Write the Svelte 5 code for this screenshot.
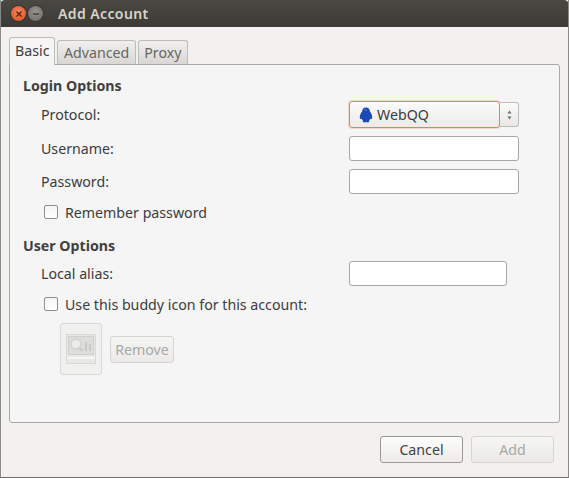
<script>
	let remember = false;
	let useIcon = false;
</script>

<div class="window">
	<header class="titlebar">
		<div class="controls">
			<span class="ctl close">
				<svg viewBox="0 0 8 8" width="8" height="8"><path d="M1.500 1.500l5 5M6.500 1.500l-5 5" stroke="#5a1a06" stroke-width="1.300" /></svg>
			</span>
			<span class="ctl min">
				<svg viewBox="0 0 8 8" width="8" height="8"><path d="M1 4h6" stroke="#3a3934" stroke-width="1.300" /></svg>
			</span>
		</div>
		<span class="title">Add Account</span>
	</header>

	<main class="content">
		<div class="tabs">
			<div class="tab active">Basic</div>
			<div class="tab">Advanced</div>
			<div class="tab">Proxy</div>
		</div>

		<section class="panel">
			<h3 class="heading first">Login Options</h3>

			<div class="row protocol">
				<span class="label">Protocol:</span>
				<div class="combo">
					<div class="combo-main">
						<svg class="qq" viewBox="0 0 14 16" width="14" height="16">
							<path d="M7 .5C4.300 .5 3.200 2.500 3.100 4.500 2.100 5.600 .6 8.200 .8 10.500 .9 12 1.800 12.300 2.700 11.800 3.100 12.700 3.500 13.300 4 13.800 3.400 14.500 4 15.500 5.200 15.500 6 15.500 6.600 15.300 7 15 7.400 15.300 8 15.500 8.800 15.500 10 15.500 10.600 14.500 10 13.800 10.500 13.300 10.900 12.700 11.300 11.800 12.200 12.300 13.100 12 13.200 10.500 13.400 8.200 11.900 5.600 10.900 4.500 10.800 2.500 9.700 .5 7 .5Z" fill="#1c49b8" />
							<path d="M5 3.500c.8-.9 2.200-.9 3 0" stroke="#5d83dc" stroke-width="1" fill="none" />
						</svg>
						<span>WebQQ</span>
					</div>
					<div class="combo-arrows">
						<svg viewBox="0 0 7 12" width="7" height="12">
							<path d="M3.500 1.500L5.500 4.500H1.500Z" fill="#6a6a68" />
							<path d="M3.500 10.500L1.500 7.500H5.500Z" fill="#6a6a68" />
						</svg>
					</div>
				</div>
			</div>

			<div class="row username">
				<label class="label" for="username">Username:</label>
				<input id="username" class="entry" type="text" />
			</div>

			<div class="row password">
				<label class="label" for="password">Password:</label>
				<input id="password" class="entry" type="password" />
			</div>

			<label class="check remember">
				<input type="checkbox" bind:checked={remember} />
				<span>Remember password</span>
			</label>

			<h3 class="heading second">User Options</h3>

			<div class="row alias">
				<label class="label" for="alias">Local alias:</label>
				<input id="alias" class="entry short" type="text" />
			</div>

			<label class="check buddy">
				<input type="checkbox" bind:checked={useIcon} />
				<span>Use this buddy icon for this account:</span>
			</label>

			<div class="icon-row">
				<button class="icon-btn" disabled aria-label="Buddy icon">
					<svg viewBox="0 0 30 30" width="30" height="30">
						<rect x="0.500" y="0.500" width="29" height="29" fill="#e8e8e7" stroke="#d8d8d7" />
						<rect x="2.500" y="2.500" width="25" height="18" fill="#dddddc" stroke="#d0d0cf" />
						<circle cx="10" cy="10" r="5" fill="#ebebea" stroke="#cbcbca" />
						<path d="M13 14l4 3M20 8v9M24 10v7" stroke="#cacac9" stroke-width="2" />
						<path d="M1 24h28" stroke="#f5f5f4" stroke-width="2" />
					</svg>
				</button>
				<button class="btn remove" disabled>Remove</button>
			</div>
		</section>

		<footer class="actions">
			<button class="btn action">Cancel</button>
			<button class="btn action" disabled>Add</button>
		</footer>
	</main>
</div>

<style>
	:global(body) {
		margin: 0;
		background: #f2f1ef;
	}

	.window {
		width: 569px;
		height: 478px;
		display: flex;
		flex-direction: column;
		font-family: "Noto Sans", "Open Sans", sans-serif;
		font-size: 14.2px;
		color: #3c3c3c;
		background: #f2f1ef;
		box-sizing: border-box;
		border-left: 1px solid #8a8985;
		border-right: 1px solid #8a8985;
		border-bottom: 1px solid #6f6e6a;
		overflow: hidden;
	}

	.titlebar {
		height: 27px;
		margin: 0 -1px;
		flex: none;
		display: flex;
		align-items: center;
		padding-left: 11px;
		gap: 15px;
		border-radius: 5px 5px 0 0;
		background: linear-gradient(#4a4842, #3b3a35);
	}

	.controls {
		display: flex;
		gap: 2px;
	}

	.ctl {
		width: 15px;
		height: 15px;
		border-radius: 50%;
		display: flex;
		align-items: center;
		justify-content: center;
	}

	.close {
		background: radial-gradient(circle at 50% 40%, #f58a5e, #d9481c);
		box-shadow: 0 0 0 1px #38362f;
	}

	.min {
		background: radial-gradient(circle at 50% 40%, #96948c, #6a6860);
		box-shadow: 0 0 0 1px #38362f;
	}

	.title {
		font-weight: 600;
		font-size: 14px;
		letter-spacing: 0.4px;
		color: #d8d5cb;
	}

	.content {
		flex: 1;
		padding: 10px 8px 0;
		display: flex;
		flex-direction: column;
	}

	.tabs {
		height: 28px;
		display: flex;
		align-items: flex-end;
		gap: 2px;
		position: relative;
		z-index: 1;
	}

	.tab {
		height: 24px;
		padding: 0 5.500px;
		box-sizing: border-box;
		line-height: 24px;
		border: 1px solid #bdbcb8;
		border-bottom: none;
		border-radius: 3px 3px 0 0;
		background: linear-gradient(#f0efee, #d8d7d4);
		color: #67665f;
		margin-bottom: 1px;
	}

	.tab.active {
		height: 28px;
		line-height: 26px;
		padding: 0 5px;
		margin-bottom: 0;
		background: #f5f5f5;
		color: #3c3c3c;
	}

	.panel {
		height: 359px;
		box-sizing: border-box;
		margin-top: -1px;
		border: 1px solid #a9a8a4;
		border-radius: 0 3px 3px 3px;
		background: #f5f5f5;
		padding: 0 13px;
	}

	.heading {
		margin: 0;
		font-size: 14.2px;
		font-weight: 700;
		line-height: 20px;
		color: #3f3f3f;
	}

	.first {
		margin-top: 11px;
	}

	.second {
		margin-top: 14px;
	}

	.row {
		display: flex;
		align-items: center;
		padding-left: 18px;
	}

	.label {
		width: 308px;
		flex: none;
	}

	.protocol {
		margin-top: 5px;
		height: 27px;
	}

	.username {
		margin-top: 8px;
		height: 25px;
	}

	.password {
		margin-top: 8px;
		height: 25px;
	}

	.alias {
		margin-top: 5px;
		height: 25px;
	}

	.combo {
		width: 170px;
		height: 27px;
		display: flex;
	}

	.combo-main {
		width: 151px;
		box-sizing: border-box;
		display: flex;
		align-items: center;
		gap: 4px;
		padding-left: 9px;
		border: 1px solid #e2825c;
		border-radius: 3px;
		box-shadow: 0 0 0 1px #f3d9cd;
		background: linear-gradient(#fafafa, #ecebe9);
	}

	.combo-arrows {
		flex: 1;
		box-sizing: border-box;
		display: flex;
		align-items: center;
		justify-content: center;
		height: 25px;
		margin-top: 1px;
		border: 1px solid #bdbcb8;
		border-left: none;
		border-radius: 0 3px 3px 0;
		background: linear-gradient(#fbfbfa, #e9e8e6);
	}

	.entry {
		width: 170px;
		height: 25px;
		box-sizing: border-box;
		padding: 0 6px;
		border: 1px solid #a8a7a3;
		border-radius: 3px;
		background: #fff;
		outline: none;
		font: inherit;
	}

	.entry.short {
		width: 158px;
	}

	.check {
		display: flex;
		align-items: center;
		gap: 7px;
		padding-left: 21px;
		height: 20px;
	}

	.check input {
		appearance: none;
		width: 14px;
		height: 14px;
		margin: 0;
		box-sizing: border-box;
		border: 1px solid #8f8e8a;
		border-radius: 2px;
		background: linear-gradient(#f4f4f3, #fff);
	}

	.remember {
		margin-top: 8px;
	}

	.buddy {
		margin-top: 8px;
	}

	.icon-row {
		display: flex;
		align-items: center;
		gap: 8px;
		padding-left: 37px;
		margin-top: 9px;
	}

	button {
		font: inherit;
		padding: 0;
	}

	.icon-btn {
		width: 42px;
		height: 52px;
		box-sizing: border-box;
		display: flex;
		align-items: center;
		justify-content: center;
		border: 1px solid #d9d8d6;
		border-radius: 3px;
		background: #f0f0ef;
	}

	.btn {
		box-sizing: border-box;
		border: 1px solid #9a9995;
		border-radius: 3px;
		background: linear-gradient(#fdfdfc, #ecebe9);
		color: #3f3f4a;
	}

	.btn:disabled {
		border-color: #d6d5d2;
		background: linear-gradient(#f5f5f4, #ebeae8);
		color: #a8a8a6;
	}

	.remove {
		width: 64px;
		height: 27px;
	}

	.actions {
		display: flex;
		justify-content: flex-end;
		gap: 8px;
		padding-right: 6px;
		margin-top: 13px;
	}

	.action {
		width: 83px;
		height: 27px;
	}
</style>
